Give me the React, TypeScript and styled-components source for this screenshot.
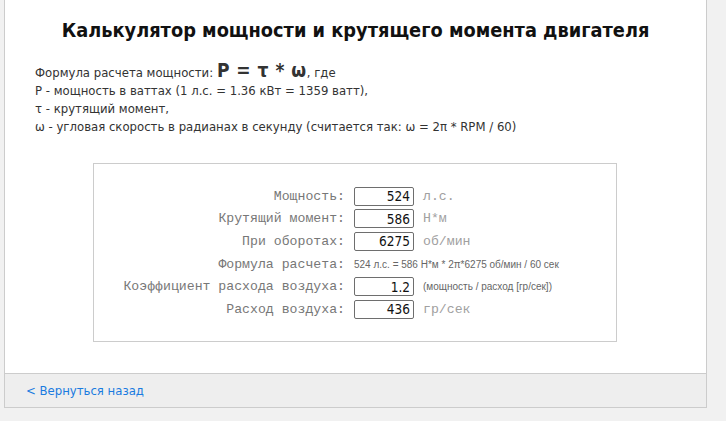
import React from "react";
import styled, { createGlobalStyle } from "styled-components";

const GlobalStyle = createGlobalStyle`
  html, body { margin: 0; padding: 0; }
  body {
    background: #f1f1f1;
    font-family: "DejaVu Sans Condensed", "DejaVu Sans", sans-serif;
  }
`;

const Page = styled.div`
  width: 701px;
  margin-left: 4px;
  background: #fff;
  border: 1px solid #cccccc;
  border-top: none;
`;

const Title = styled.h1`
  margin: 0;
  padding-top: 18px;
  height: 26px;
  line-height: 26px;
  text-align: center;
  font-size: 19.8px;
  font-weight: bold;
  color: #111;
`;

const Description = styled.div`
  margin-top: 17px;
  padding-left: 30px;
  font-size: 13px;
  line-height: 18px;
  color: #333;
`;

const Formula = styled.span`
  font-size: 19px;
  font-weight: bold;
  letter-spacing: 0.5px;
  color: #333;
`;

const Panel = styled.div`
  margin: 27px 0 0 88px;
  width: 524px;
  border: 1px solid #cccccc;
  padding: 21px 0 20px 24px;
  box-sizing: border-box;
  height: 179px;
`;

const Grid = styled.div`
  display: grid;
  grid-template-columns: 227px 60px max-content;
  grid-auto-rows: 22.6px;
  column-gap: 9px;
  align-items: center;
`;

const Label = styled.div`
  text-align: right;
  font-family: "Liberation Mono", monospace;
  font-size: 13.2px;
  color: #777;
  white-space: nowrap;
`;

const Field = styled.input`
  width: 60px;
  height: 19px;
  box-sizing: border-box;
  border: 1px solid #6e6e6e;
  border-radius: 2px;
  padding: 0 3px 0 0;
  text-align: right;
  font-family: "DejaVu Sans Condensed", "DejaVu Sans", sans-serif;
  font-size: 13.5px;
  color: #111;
  background: #fff;
`;

const Unit = styled.div`
  font-family: "Liberation Mono", monospace;
  font-size: 13.2px;
  color: #a0a0a0;
  white-space: nowrap;
`;

const Note = styled.div<{ $span?: boolean }>`
  font-family: "Liberation Sans", Arial, sans-serif;
  font-size: 10px;
  color: #666;
  white-space: nowrap;
  ${(p) => (p.$span ? "grid-column: 2 / 4;" : "")}
`;

const Footer = styled.div`
  margin-top: 31px;
  background: #eeeeee;
  border-top: 1px solid #cccccc;
  height: 33px;
  display: flex;
  align-items: center;
  padding-left: 21px;
`;

const BackLink = styled.a`
  color: #1a7be0;
  font-size: 13px;
  text-decoration: none;
`;

type FieldRow = { label: string; value: string; unit: string; note?: boolean };
type FormulaRow = { label: string; formula: string };
type Row = FieldRow | FormulaRow;

const rows: Row[] = [
  { label: "Мощность:", value: "524", unit: "л.с." },
  { label: "Крутящий момент:", value: "586", unit: "Н*м" },
  { label: "При оборотах:", value: "6275", unit: "об/мин" },
  { label: "Формула расчета:", formula: "524 л.с. = 586 Н*м * 2π*6275 об/мин / 60 сек" },
  { label: "Коэффициент расхода воздуха:", value: "1.2", unit: "(мощность / расход [гр/сек])", note: true },
  { label: "Расход воздуха:", value: "436", unit: "гр/сек" },
];

export default function App() {
  return (
    <>
      <GlobalStyle />
      <Page>
        <Title>Калькулятор мощности и крутящего момента двигателя</Title>
        <Description>
          Формула расчета мощности: <Formula>P = τ * ω</Formula>, где
          <br />P - мощность в ваттах (1 л.с. = 1.36 кВт = 1359 ватт),
          <br />τ - крутящий момент,
          <br />ω - угловая скорость в радианах в секунду (считается так: ω = 2π * RPM / 60)
        </Description>
        <Panel>
          <Grid>
            {rows.map((r, i) => (
              <React.Fragment key={i}>
                <Label>{r.label}</Label>
                {"formula" in r ? (
                  <Note $span>{r.formula}</Note>
                ) : (
                  <>
                    <Field defaultValue={r.value} />
                    {r.note ? <Note>{r.unit}</Note> : <Unit>{r.unit}</Unit>}
                  </>
                )}
              </React.Fragment>
            ))}
          </Grid>
        </Panel>
        <Footer>
          <BackLink href="#">&lt; Вернуться назад</BackLink>
        </Footer>
      </Page>
    </>
  );
}
